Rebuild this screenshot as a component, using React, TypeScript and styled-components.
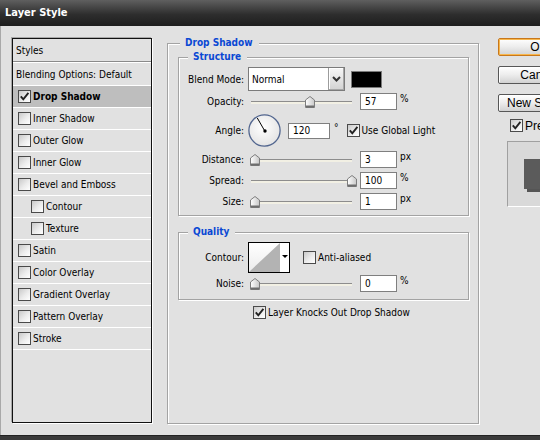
import React from 'react';
import styled, { createGlobalStyle } from 'styled-components';

const Global = createGlobalStyle`
  html, body { margin: 0; padding: 0; background: #e1e1e1; }
  body {
    font-family: "DejaVu Sans Condensed", "Liberation Sans", sans-serif;
    font-size: 10px;
    color: #000;
  }
`;

const Window = styled.div`
  width: 540px;
  height: 440px;
  display: flex;
  flex-direction: column;
  overflow: hidden;
  background: #e1e1e1;
`;

const TitleBar = styled.div`
  height: 26px;
  flex: none;
  box-sizing: border-box;
  padding: 0 0 1px 5px;
  display: flex;
  align-items: center;
  background: linear-gradient(#5f5f5f, #2e2e2e 55%, #1d1d1d);
  color: #fff;
  font-weight: bold;
  font-size: 11px;
`;

const Body = styled.div`
  flex: 1;
  min-height: 0;
  display: flex;
  align-items: flex-start;
  padding: 12px 0 0 11px;
  border-left: 1px solid #a9a9a9;
  overflow: hidden;
`;

const BottomFrame = styled.div`
  height: 4px;
  flex: none;
  background: #3a3a3a;
  border-top: 1px solid #222;
`;

/* ---------- left styles list ---------- */

const StylesPanel = styled.div`
  width: 140px;
  height: 385px;
  flex: none;
  box-sizing: border-box;
  border: 1px solid #111;
  box-shadow: -1px -1px 0 #a8a8a8, 1px 1px 0 #fff;
  display: flex;
  flex-direction: column;
`;

const HeaderRow = styled.div`
  height: 22px;
  flex: none;
  display: flex;
  align-items: center;
  padding-left: 3px;
  border-bottom: 1px solid #8a8a8a;
`;

const BlendingRow = styled.div`
  height: 22px;
  flex: none;
  display: flex;
  align-items: center;
  padding-left: 3px;
  border-top: 1px solid #fff;
  border-bottom: 1px solid #fff;
`;

const EffectRow = styled.div<{ $selected?: boolean; $indent?: boolean }>`
  height: 21px;
  flex: none;
  display: flex;
  align-items: center;
  padding-left: ${(p) => (p.$indent ? 18 : 5)}px;
  border-bottom: 1px solid #fff;
  background: ${(p) => (p.$selected ? '#bebebe' : 'transparent')};
  font-weight: ${(p) => (p.$selected ? 'bold' : 'normal')};
`;

const RowText = styled.span`
  margin-left: 2px;
  white-space: nowrap;
`;

/* ---------- checkbox ---------- */

const CheckBoxBox = styled.span`
  flex: none;
  width: 13px;
  height: 13px;
  box-sizing: border-box;
  border: 1px solid #4a4a4a;
  background: linear-gradient(135deg, #c9c9c9 0%, #ececec 55%, #fff 100%);
  display: inline-flex;
  align-items: center;
  justify-content: center;
`;

function CheckBox({ checked }: { checked?: boolean }) {
  return (
    <CheckBoxBox>
      {checked && (
        <svg width="11" height="11" viewBox="0 0 11 11">
          <polyline points="1.8,5.3 4.3,8.3 9.4,1.8" fill="none" stroke="#222" strokeWidth="1.9" />
        </svg>
      )}
    </CheckBoxBox>
  );
}

/* ---------- group boxes ---------- */

const Group = styled.div`
  position: relative;
  box-sizing: border-box;
  border: 1px solid #a3a3a3;
  box-shadow: inset 1px 1px 0 #fff, 1px 1px 0 #fff;
`;

const Legend = styled.span<{ $left: number }>`
  position: absolute;
  top: -7px;
  left: ${(p) => p.$left}px;
  padding: 0 6px 0 5px;
  line-height: 12px;
  background: #e1e1e1;
  color: #0a48d4;
  font-weight: bold;
  white-space: nowrap;
`;

const OuterGroup = styled(Group)`
  flex: none;
  width: 312px;
  height: 381px;
  margin: 5px 0 0 15px;
  padding: 13px 9px 0 10px;
  display: flex;
  flex-direction: column;
`;

const StructureGroup = styled(Group)`
  padding: 9px 0 3px;
  display: flex;
  flex-direction: column;
`;

const QualityGroup = styled(Group)`
  margin-top: 16px;
  padding: 9px 0 5px;
  display: flex;
  flex-direction: column;
`;

const Row = styled.div<{ $h: number }>`
  height: ${(p) => p.$h}px;
  flex: none;
  display: flex;
  align-items: center;
`;

const Label = styled.span`
  width: 65px;
  margin-right: 4px;
  flex: none;
  text-align: right;
  white-space: nowrap;
`;

const Unit = styled.span<{ $ml?: number }>`
  margin-left: ${(p) => p.$ml ?? 3}px;
  margin-bottom: 6px;
  white-space: nowrap;
`;

const InlineText = styled.span<{ $ml?: number }>`
  margin-left: ${(p) => p.$ml ?? 2}px;
  white-space: nowrap;
`;

const NumField = styled.div<{ $w?: number; $h?: number; $ml?: number }>`
  flex: none;
  width: ${(p) => p.$w ?? 37}px;
  height: ${(p) => p.$h ?? 17}px;
  margin-left: ${(p) => p.$ml ?? 8}px;
  box-sizing: border-box;
  border: 1px solid #7f7f7f;
  background: #fff;
  padding-left: 4px;
  display: flex;
  align-items: center;
`;

/* select */
const Select = styled.div`
  flex: none;
  width: 97px;
  height: 24px;
  box-sizing: border-box;
  border: 1px solid #7b7b7b;
  background: #fff;
  display: flex;
`;

const SelectText = styled.span`
  flex: 1;
  padding-left: 3px;
  display: flex;
  align-items: center;
`;

const SelectArrow = styled.span`
  flex: none;
  width: 16px;
  box-sizing: border-box;
  border-left: 1px solid #9c9c9c;
  background: linear-gradient(#f6f6f6, #d2d2d2);
  box-shadow: inset -1px -1px 0 #a6a6a6, inset 1px 1px 0 #fff;
  display: flex;
  align-items: center;
  justify-content: center;
`;

const Swatch = styled.div`
  flex: none;
  width: 31px;
  height: 17px;
  margin-left: 6px;
  box-sizing: border-box;
  border: 1px solid #7a7a7a;
  background: #000;
`;

/* slider */
const SliderWrap = styled.div`
  position: relative;
  flex: none;
  width: 102px;
  height: 12px;
  margin-left: 2px;
  display: flex;
  align-items: flex-end;
`;

const Track = styled.div`
  width: 101px;
  height: 3px;
  margin: 0 0 4px 1px;
  box-sizing: border-box;
  border-top: 1px solid #8d8d8d;
  background: #f2f0e4;
`;

const ThumbBox = styled.span`
  position: absolute;
  top: 0;
  width: 10px;
  height: 12px;
  display: block;
`;

function Slider({ value }: { value: number }) {
  return (
    <SliderWrap>
      <Track />
      <ThumbBox style={{ left: `${(value / 100) * 97}px` }}>
        <svg width="10" height="12" viewBox="0 0 10 12">
          <defs>
            <linearGradient id="thumbg" x1="0" y1="0" x2="1" y2="0">
              <stop offset="0" stopColor="#ffffff" />
              <stop offset="1" stopColor="#c8c8c8" />
            </linearGradient>
          </defs>
          <path d="M0.5,4 L5,0.5 L9.5,4 L9.5,11.5 L0.5,11.5 Z" fill="url(#thumbg)" stroke="#7d7d7d" />
          <rect x="1" y="9.5" width="8" height="2" fill="#6e6e6e" />
        </svg>
      </ThumbBox>
    </SliderWrap>
  );
}

/* dial */
const DialBox = styled.span`
  flex: none;
  width: 33px;
  height: 33px;
  display: block;
`;

function Dial({ angle }: { angle: number }) {
  const r = (angle * Math.PI) / 180;
  const x2 = 16.5 + 14.5 * Math.cos(r);
  const y2 = 16.5 - 14.5 * Math.sin(r);
  return (
    <DialBox>
      <svg width="33" height="33" viewBox="0 0 33 33">
        <defs>
          <radialGradient id="dialg" cx="0.45" cy="0.4" r="0.6">
            <stop offset="0" stopColor="#ffffff" />
            <stop offset="1" stopColor="#e4e4e4" />
          </radialGradient>
        </defs>
        <circle cx="16.5" cy="16.5" r="15.6" fill="url(#dialg)" stroke="#52668f" strokeWidth="1.3" />
        <line x1="16.5" y1="16.5" x2={x2} y2={y2} stroke="#000" strokeWidth="1" />
        <circle cx="17" cy="17" r="1.7" fill="#000" />
      </svg>
    </DialBox>
  );
}

/* contour picker */
const ContourBox = styled.div`
  flex: none;
  width: 42px;
  height: 31px;
  box-sizing: border-box;
  border: 1px solid #000;
  background: #fff;
  display: flex;
`;

const ContourArrow = styled.span`
  flex: 1;
  display: flex;
  align-items: center;
  justify-content: center;
  &::after {
    content: '';
    border-left: 3px solid transparent;
    border-right: 3px solid transparent;
    border-top: 3px solid #000;
    margin-bottom: 2px;
  }
`;

const CheckRow = styled.div<{ $ml?: number }>`
  display: flex;
  align-items: center;
  margin-left: ${(p) => p.$ml ?? 0}px;
`;

const KnocksRow = styled.div`
  height: 14px;
  flex: none;
  margin: 5px 0 0 75px;
  display: flex;
  align-items: center;
`;

/* ---------- right column ---------- */

const RightCol = styled.div`
  flex: none;
  width: 82px;
  margin-left: 19px;
  display: flex;
  flex-direction: column;
  font-family: "Liberation Sans", Arial, sans-serif;
  font-size: 12px;
`;

const Button = styled.div<{ $default?: boolean }>`
  height: 18px;
  box-sizing: border-box;
  border: 1px solid ${(p) => (p.$default ? '#c8771a' : '#575757')};
  border-radius: 2px;
  background: linear-gradient(#ffffff, #ececec 50%, #d2d2d2);
  box-shadow: ${(p) => (p.$default ? 'inset 0 0 0 1px #f7b64c' : 'inset 1px 1px 0 #fff')};
  display: flex;
  align-items: center;
  justify-content: center;
  white-space: nowrap;
  & + & {
    margin-top: 10px;
  }
`;

const PreviewRow = styled.div`
  display: flex;
  align-items: center;
  margin: 7px 0 0 12px;
  height: 13px;
`;

const PreviewBox = styled.div`
  margin: 9px 0 0 9px;
  width: 70px;
  height: 66px;
  box-sizing: border-box;
  border-top: 1px solid #a0a0a0;
  border-left: 1px solid #a0a0a0;
  border-bottom: 1px solid #fff;
  background: #d9d9d9;
  padding: 17px 0 0 16px;
`;

const PreviewSquare = styled.div`
  width: 31px;
  height: 30px;
  background: #5b5b5b;
  box-shadow: 3px 3px 0 #555;
`;

const effects: { label: string; checked?: boolean; selected?: boolean; indent?: boolean }[] = [
  { label: 'Drop Shadow', checked: true, selected: true },
  { label: 'Inner Shadow' },
  { label: 'Outer Glow' },
  { label: 'Inner Glow' },
  { label: 'Bevel and Emboss' },
  { label: 'Contour', indent: true },
  { label: 'Texture', indent: true },
  { label: 'Satin' },
  { label: 'Color Overlay' },
  { label: 'Gradient Overlay' },
  { label: 'Pattern Overlay' },
  { label: 'Stroke' },
];

const sliders = [
  { label: 'Distance:', value: 0, text: '3', unit: 'px' },
  { label: 'Spread:', value: 100, text: '100', unit: '%' },
  { label: 'Size:', value: 0, text: '1', unit: 'px' },
];

export default function App() {
  return (
    <Window>
      <Global />
      <TitleBar>Layer Style</TitleBar>
      <Body>
        <StylesPanel>
          <HeaderRow>Styles</HeaderRow>
          <BlendingRow>Blending Options: Default</BlendingRow>
          {effects.map((e) => (
            <EffectRow key={e.label} $selected={e.selected} $indent={e.indent}>
              <CheckBox checked={e.checked} />
              <RowText>{e.label}</RowText>
            </EffectRow>
          ))}
        </StylesPanel>

        <OuterGroup>
          <Legend $left={12}>Drop Shadow</Legend>
          <StructureGroup>
            <Legend $left={9}>Structure</Legend>
            <Row $h={24}>
              <Label>Blend Mode:</Label>
              <Select>
                <SelectText>Normal</SelectText>
                <SelectArrow>
                  <svg width="9" height="6" viewBox="0 0 9 6">
                    <polyline points="1,1 4.5,4.5 8,1" fill="none" stroke="#333" strokeWidth="2" />
                  </svg>
                </SelectArrow>
              </Select>
              <Swatch />
            </Row>
            <Row $h={21}>
              <Label>Opacity:</Label>
              <Slider value={57} />
              <NumField>57</NumField>
              <Unit>%</Unit>
            </Row>
            <Row $h={37}>
              <Label>Angle:</Label>
              <Dial angle={120} />
              <NumField $w={42} $h={16} $ml={7}>120</NumField>
              <Unit $ml={4}>°</Unit>
              <CheckRow $ml={8}>
                <CheckBox checked />
                <InlineText>Use Global Light</InlineText>
              </CheckRow>
            </Row>
            {sliders.map((s) => (
              <Row $h={21} key={s.label}>
                <Label>{s.label}</Label>
                <Slider value={s.value} />
                <NumField>{s.text}</NumField>
                <Unit>{s.unit}</Unit>
              </Row>
            ))}
          </StructureGroup>

          <QualityGroup>
            <Legend $left={9}>Quality</Legend>
            <Row $h={31}>
              <Label>Contour:</Label>
              <ContourBox>
                <svg width="31" height="29" viewBox="0 0 31 29">
                  <defs>
                    <linearGradient id="cwhite" x1="0" y1="0" x2="0" y2="1">
                      <stop offset="0" stopColor="#ffffff" />
                      <stop offset="1" stopColor="#ececec" />
                    </linearGradient>
                  </defs>
                  <rect width="31" height="29" fill="url(#cwhite)" />
                  <polygon points="0,29 31,0 31,29" fill="#b3b3b3" />
                </svg>
                <ContourArrow />
              </ContourBox>
              <CheckRow $ml={13}>
                <CheckBox />
                <InlineText>Anti-aliased</InlineText>
              </CheckRow>
            </Row>
            <Row $h={21}>
              <Label>Noise:</Label>
              <Slider value={0} />
              <NumField>0</NumField>
              <Unit>%</Unit>
            </Row>
          </QualityGroup>

          <KnocksRow>
            <CheckBox checked />
            <InlineText>Layer Knocks Out Drop Shadow</InlineText>
          </KnocksRow>
        </OuterGroup>

        <RightCol>
          <Button $default>OK</Button>
          <Button>Cancel</Button>
          <Button>New Style...</Button>
          <PreviewRow>
            <CheckBox checked />
            <InlineText>Preview</InlineText>
          </PreviewRow>
          <PreviewBox>
            <PreviewSquare />
          </PreviewBox>
        </RightCol>
      </Body>
      <BottomFrame />
    </Window>
  );
}
